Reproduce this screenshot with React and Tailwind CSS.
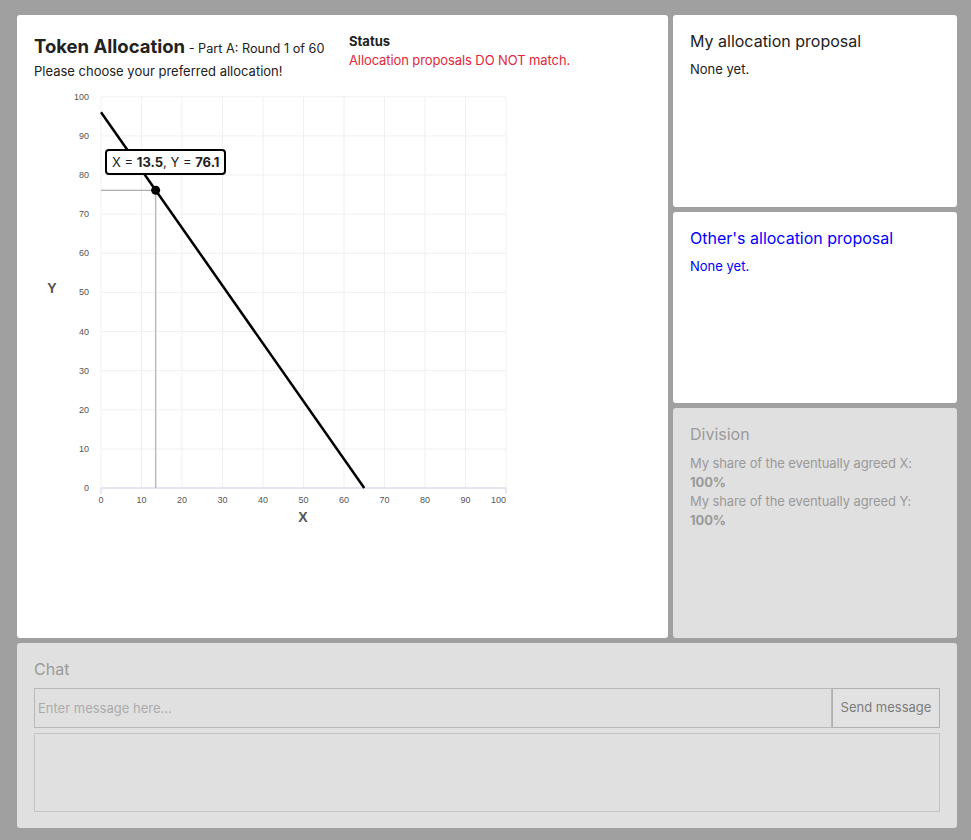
import React from 'react';

const px = (x) => 67 + x * 4.05;
const py = (y) => 400 - y * 3.912;

const ticks = [0, 10, 20, 30, 40, 50, 60, 70, 80, 90, 100];

const AllocationChart = () => {
  const point = { x: 13.5, y: 76.1 };
  return (
    <div className="relative w-[500px] h-[450px]">
      <svg width="500" height="450" className="block" style={{ fontFamily: '"Liberation Sans", Arial, sans-serif' }}>
        {/* grid */}
        {ticks.map((t) => (
          <line key={'v' + t} x1={px(t)} x2={px(t)} y1={py(100)} y2={py(0)} stroke="#f0f0f0" strokeWidth="1" />
        ))}
        {ticks.map((t) => (
          <line key={'h' + t} x1={px(0)} x2={px(100)} y1={py(t)} y2={py(t)} stroke="#f0f0f0" strokeWidth="1" />
        ))}
        {/* x axis */}
        <line x1={px(0)} x2={px(100)} y1={py(0)} y2={py(0)} stroke="#ccd6eb" strokeWidth="1" />
        <line x1={px(0)} x2={px(0)} y1={py(0)} y2={py(0) + 6} stroke="#ccd6eb" strokeWidth="1" />
        <line x1={px(100)} x2={px(100)} y1={py(0)} y2={py(0) + 6} stroke="#ccd6eb" strokeWidth="1" />

        {/* labels */}
        {ticks.map((t) => (
          <text key={'yl' + t} x="55" y={py(t) + 3} textAnchor="end" fontSize="9" fill="#555">
            {t}
          </text>
        ))}
        {ticks.map((t) => (
          <text
            key={'xl' + t}
            x={t === 100 ? px(100) : px(t)}
            y="415"
            textAnchor={t === 100 ? 'end' : 'middle'}
            fontSize="9"
            fill="#555"
          >
            {t}
          </text>
        ))}
        <text x="269" y="434" textAnchor="middle" fontSize="14" fontWeight="bold" fill="#555">X</text>
        <text x="18" y="205" textAnchor="middle" fontSize="14" fontWeight="bold" fill="#555">Y</text>

        {/* crosshair */}
        <line x1={px(0)} x2={px(point.x)} y1={py(point.y)} y2={py(point.y)} stroke="#999" strokeWidth="1" />
        <line x1={px(point.x)} x2={px(point.x)} y1={py(point.y)} y2={py(0)} stroke="#bbb" strokeWidth="1.5" />

        {/* budget line */}
        <line x1={px(0)} y1={py(96.07)} x2={px(65)} y2={py(0)} stroke="#000" strokeWidth="2.5" />
        <circle cx={px(point.x)} cy={py(point.y)} r="4.5" fill="#000" />
      </svg>

      {/* tooltip */}
      <div className="absolute left-[71px] top-[61px] w-[121px] h-[26px] border-2 border-black rounded-[4px] bg-white pl-[5px] text-[13px] leading-[22px] text-[#222] whitespace-nowrap">
        X = <b>13.5</b>, Y = <b>76.1</b>
      </div>
    </div>
  );
};

const App = () => {
  return (
    <div
      className="min-h-screen bg-[#a0a0a0] pt-[15px] pl-[17px] pr-[14px] pb-[12px]"
      style={{ fontFamily: 'Inter, "Liberation Sans", Arial, sans-serif' }}
    >
      <div className="flex gap-[5px]">
        {/* Main panel */}
        <div className="w-[651px] h-[623px] bg-white rounded-[3px] pt-[17px] px-[17px]">
          <div className="flex">
            <div className="w-[315px] pt-[2px]">
              <div className="h-[24px] leading-[24px] text-[#222] whitespace-nowrap">
                <span className="text-[18.5px] font-bold">Token Allocation</span>
                <span className="text-[12.7px]"> - Part A: Round 1 of 60</span>
              </div>
              <div className="mt-[3px] text-[13px] leading-[20px] text-[#222]">
                Please choose your preferred allocation!
              </div>
            </div>
            <div className="text-[13px] leading-[19px]">
              <div className="font-bold text-[#222]">Status</div>
              <div className="text-[#e0283a] tracking-[-0.1px]">Allocation proposals DO NOT match.</div>
            </div>
          </div>
          <div className="mt-[7px]">
            <AllocationChart />
          </div>
        </div>

        {/* Right column */}
        <div className="w-[284px] flex flex-col gap-[5px]">
          <div className="h-[192px] bg-white rounded-[3px] pt-[15px] px-[17px]">
            <div className="text-[16px] leading-[22px] text-[#222]">My allocation proposal</div>
            <div className="mt-[8px] text-[13px] leading-[19px] text-[#222]">None yet.</div>
          </div>
          <div className="h-[191px] bg-white rounded-[3px] pt-[15px] px-[17px]">
            <div className="text-[16px] leading-[22px] text-[#0000ff]">Other's allocation proposal</div>
            <div className="mt-[8px] text-[13px] leading-[19px] text-[#0000ff]">None yet.</div>
          </div>
          <div className="h-[230px] bg-[#e0e0e0] rounded-[3px] pt-[15px] px-[17px] text-[#9a9a9a]">
            <div className="text-[16px] leading-[22px]">Division</div>
            <div className="mt-[9px] text-[13px] leading-[19px] tracking-[-0.1px]">
              <div>My share of the eventually agreed X:</div>
              <div className="font-bold">100%</div>
              <div>My share of the eventually agreed Y:</div>
              <div className="font-bold">100%</div>
            </div>
          </div>
        </div>
      </div>

      {/* Chat */}
      <div className="mt-[5px] w-[940px] h-[185px] bg-[#e0e0e0] rounded-[3px] pt-[15px] px-[17px]">
        <div className="text-[16px] leading-[22px] text-[#9a9a9a]">Chat</div>
        <div className="mt-[8px] flex h-[40px]">
          <input
            disabled
            placeholder="Enter message here..."
            className="flex-1 h-full bg-[#e0e0e0] border border-[#b9b9b9] px-[3px] text-[13px] text-[#888] placeholder:text-[#ababab] outline-none"
          />
          <button
            disabled
            className="w-[108px] h-full bg-[#e2e2e2] border border-[#b0b0b0] text-[13px] text-[#7c7c7c]"
          >
            Send message
          </button>
        </div>
        <div className="mt-[5px] h-[79px] border border-[#c4c4c4] bg-[#e0e0e0]" />
      </div>
    </div>
  );
};

export default App;
